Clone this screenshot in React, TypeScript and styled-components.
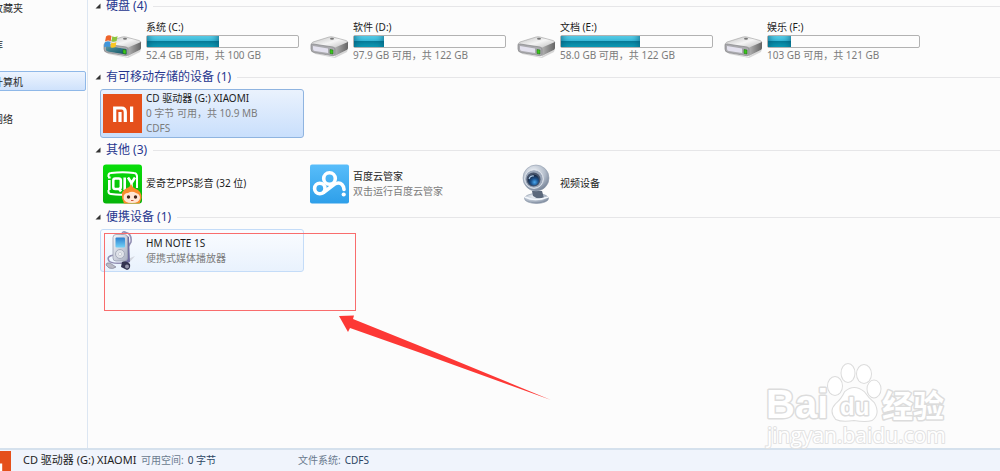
import React from "react";
import styled, { createGlobalStyle } from "styled-components";

const Global = createGlobalStyle`
  * { box-sizing: border-box; }
  body { margin: 0; background: #fcfcfc; font-family: "Noto Sans", "Noto Sans CJK SC", sans-serif; }
`;

const Window = styled.div`
  position: relative;
  display: flex;
  flex-direction: column;
  height: 100vh;
  overflow: hidden;
  font-size: 10px;
  color: #1c1c1c;
`;
const Body = styled.div`
  display: flex;
  flex: 1;
  min-height: 0;
  overflow: hidden;
`;
const Sidebar = styled.nav`
  display: flex;
  flex-direction: column;
  gap: 17px;
  flex: 0 0 88px;
  overflow: hidden;
  margin-top: -3px;
  padding-right: 1px;
  border-right: 1px solid #dce6f2;
`;
const NavLink = styled.a<{ $active?: boolean }>`
  display: flex;
  align-items: center;
  height: 20px;
  margin-left: -8px;
  border: 1px solid ${(p) => (p.$active ? "#8fb8e8" : "transparent")};
  border-radius: 2px;
  background: ${(p) => (p.$active ? "linear-gradient(#edf4fe, #cfe2fc)" : "none")};
  color: #2a2a2a;
  text-decoration: none;
`;
const Content = styled.main`
  flex: 1;
  min-width: 0;
  margin-top: -4px;
`;
const GroupTitle = styled.h2`
  display: flex;
  align-items: center;
  height: 20px;
  margin: 0;
  padding-left: 7px;
  font-size: 12px;
  line-height: 20px;
  font-weight: 400;
  color: #27378f;
  white-space: nowrap;
  svg { margin-right: 5px; }
  &::after {
    content: "";
    flex: 1;
    height: 1px;
    margin-left: 6px;
    background: #e6e6e8;
  }
`;
const Tiles = styled.div`
  display: flex;
  gap: 3px;
  padding: 2px 0 2px 12px;
`;
const Tile = styled.button<{ $state?: "selected" | "hover" }>`
  display: flex;
  align-items: center;
  gap: 3px;
  flex: 0 0 204px;
  min-height: 43px;
  padding: 0 4px 0 2px;
  border: 1px solid ${(p) => (p.$state === "selected" ? "#8fb4e0" : p.$state === "hover" ? "#c4dcf8" : "transparent")};
  border-radius: 3px;
  background: ${(p) =>
    p.$state === "selected" ? "linear-gradient(#eaf2fd, #c9dffc)" : p.$state === "hover" ? "linear-gradient(#fafcff, #e9f2fd)" : "none"};
  font: inherit;
  color: inherit;
  text-align: left;
  svg { flex: none; }
`;
const Lines = styled.span`
  display: flex;
  flex-direction: column;
  flex: 1;
  padding: 1px 0;
  line-height: 15px;
  white-space: nowrap;
`;
const Muted = styled.span`
  color: #7b7b7b;
`;
const Meter = styled.span`
  display: block;
  height: 13px;
  border: 1px solid #b2b2b2;
  border-radius: 2px;
  background: #fdfdfd;
`;
const Fill = styled.span`
  display: block;
  height: 11px;
  background: linear-gradient(#5ccfe8 0, #35b6d6 45%, #067b98 50%, #0d9cb6 100%);
  box-shadow: inset 8px 0 8px -8px #055a78, inset -8px 0 8px -8px #055a78;
`;
const Details = styled.footer`
  display: flex;
  flex: 0 0 23px;
  overflow: hidden;
  border-top: 2px solid #d5e1ed;
  background: #f0f4fc;
  padding-top: 1px;
  line-height: 18px;
  white-space: nowrap;
  > svg { flex: none; margin-left: -28px; }
`;
const DetailColumn = styled.div<{ $width: number; $inset?: number }>`
  flex: 0 0 ${(p) => p.$width}px;
  padding-left: ${(p) => p.$inset ?? 0}px;
  color: #2c4564;
`;
const DetailName = styled.div`
  font-size: 11px;
  color: #1e1e1e;
`;
const DetailLabel = styled.span`
  color: #6b7b8f;
  margin-right: 4px;
`;
const DetailKind = styled.div`
  line-height: 14px;
`;
const Highlight = styled.div`
  position: absolute;
  left: 104px;
  top: 233px;
  width: 252px;
  height: 78px;
  border: 1px solid #f96d6d;
`;
const Arrow = styled.svg`
  position: absolute;
  left: 330px;
  top: 306px;
`;
const Watermark = styled.svg`
  position: absolute;
  right: 46px;
  bottom: 18px;
`;

const Triangle = () => (
  <svg width="6" height="6" viewBox="0 0 6 6" aria-hidden="true">
    <path d="M5.5 0.5V5.5H0.5Z" fill="#333" />
  </svg>
);

const DriveIcon = ({ system }: { system?: boolean }) => (
  <svg width="40" height="40" viewBox="0 -2 40 40" aria-hidden="true">
    <defs>
      <linearGradient id="driveTop" x1="0" y1="0" x2="1" y2="1">
        <stop offset="0" stopColor="#bcbcbc" />
        <stop offset=".5" stopColor="#f5f5f5" />
        <stop offset="1" stopColor="#b5b5b5" />
      </linearGradient>
      <linearGradient id="driveSide" x1="0" y1="0" x2="1" y2="0">
        <stop offset="0" stopColor="#b8b8b8" />
        <stop offset="1" stopColor="#646464" />
      </linearGradient>
      <linearGradient id="driveTeal" x1="0" y1="0" x2="1" y2="1">
        <stop offset="0" stopColor="#5b98a6" />
        <stop offset="1" stopColor="#0b5260" />
      </linearGradient>
    </defs>
    <path d="M1 25 Q2 29 6 29 L24 33 L38 25 L37 28 L25 34 L5 30Z" fill="#000" opacity=".15" />
    <path d="M1 21 Q1 19 3 18 L19 13 Q21 12.500 23 13 L36 16.500 Q38 17 37.800 19 L25 25 L2 22Z" fill="url(#driveTop)" stroke="#a0a0a0" strokeWidth=".6" />
    <path d="M24 24 L38 18 V24 Q38 25 37 25.800 L25 32Z" fill="url(#driveSide)" />
    <path d="M1 21 Q1 20 3 20 L23 23 Q25 23.500 25 25 V30 Q25 32 23 31.800 L4 28.500 Q1 28 1 25Z" fill="#aaaaae" stroke="#858588" strokeWidth=".7" />
    <path d="M3 22 L18 24.500 V29 L5 27 Q3 27 3 25Z" fill={system ? "url(#driveTeal)" : "#e3e1ee"} />
    {system && <path d="M3 22 L23.500 25 V30.500 L5 27.500 Q3 27 3 25Z" fill="url(#driveTeal)" />}
    <path d="M20 25.500 L23 26 V30 L20 29.500Z" fill="#3ac71c" stroke="#1e6812" strokeWidth=".5" />
    <ellipse cx="22" cy="14.800" rx="2" ry="1" fill="#777" />
    {system && (
      <g>
        <path d="M3 12.500 Q5.500 10.500 8.500 12 L7.700 17 Q5 16 2 17.500Z" fill="#ee642b" />
        <path d="M9.300 12.300 Q12 13.800 14.600 12 L13.600 17 Q11 18.500 8.500 17.300Z" fill="#8bc440" />
        <path d="M1.800 18.300 Q4.800 16.900 7.500 18 L6.700 23 Q4 21.800 1 23.300Z" fill="#3f96dc" />
        <path d="M8.300 18.400 Q11 19.600 13.400 18 L12.500 23 Q10 24.500 7.500 23.300Z" fill="#fbc722" />
      </g>
    )}
  </svg>
);

const MiIcon = () => (
  <svg width="40" height="40" viewBox="0 0 40 40" aria-hidden="true">
    <rect width="39" height="39" fill="#e5501b" />
    <path d="M11.700 28V14H18.500Q22.300 14 22.300 18V28M17 18V28M28.600 12.500V28" fill="none" stroke="#fff" strokeWidth="3.200" />
  </svg>
);

const IqiyiIcon = () => (
  <svg width="40" height="40" viewBox="0 0 40 40" aria-hidden="true">
    <defs>
      <linearGradient id="iq" x1="0" y1="0" x2="0" y2="1">
        <stop offset="0" stopColor="#08de0a" />
        <stop offset="1" stopColor="#06b308" />
      </linearGradient>
    </defs>
    <rect width="39" height="39" y=".5" rx="3" fill="url(#iq)" />
    <path d="M5.500 13V11Q6 9 8 9Q20 7.500 31 9Q33.500 9 34 12V24M5.500 26V28Q6 30 8 30Q15 31 22 30.500" fill="none" stroke="#fff" strokeWidth="2" />
    <path d="M6.300 16V26M6.300 12.500V14.500M15.500 24L18 27.500M21.700 13.500V26M25 13.500L28.500 19V26M32 13.500L28.500 19" fill="none" stroke="#fff" strokeWidth="2.600" />
    <rect x="10.300" y="14.500" width="7.500" height="10.500" rx="2" fill="none" stroke="#fff" strokeWidth="2.500" />
    <path d="M19 34Q18 26 24 24Q27 23 28 20Q29 23 32 24.500Q39 27 38.500 34L36.500 39.500H21Z" fill="#f98b2c" />
    <path d="M20.500 34Q20.500 29 25 29Q29 26.500 33 29Q37 30 37 34Q36.500 39 29 39Q21 39 20.500 34Z" fill="#ffe6d4" />
    <circle cx="25.500" cy="33" r="1.700" fill="#45261b" />
    <circle cx="32.500" cy="33" r="1.700" fill="#45261b" />
    <path d="M28 36.500H30.500" stroke="#d45b41" />
  </svg>
);

const CloudIcon = () => (
  <svg width="40" height="40" viewBox="0 0 40 40" aria-hidden="true">
    <defs>
      <linearGradient id="cloud" x1="0" y1="0" x2="0" y2="1">
        <stop offset="0" stopColor="#58bdfa" />
        <stop offset="1" stopColor="#2e9fe9" />
      </linearGradient>
    </defs>
    <rect width="39" height="39" y=".5" rx="2" fill="url(#cloud)" />
    <circle cx="19.500" cy="14.500" r="5.800" fill="none" stroke="#fff" strokeWidth="3.600" />
    <circle cx="9.800" cy="24.500" r="5.200" fill="none" stroke="#fff" strokeWidth="3.600" />
    <path d="M13.500 28.500L24 20.500Q29 17.500 32 20.500Q34 22.500 34 25.500" fill="none" stroke="#fff" strokeWidth="3.600" strokeLinecap="round" />
    <circle cx="33.700" cy="30.500" r="2.100" fill="#fff" />
  </svg>
);

const WebcamIcon = () => (
  <svg width="40" height="40" viewBox="0 0 40 40" aria-hidden="true">
    <defs>
      <radialGradient id="camBody" cx=".4" cy=".3" r=".75">
        <stop offset="0" stopColor="#f3f6fa" />
        <stop offset=".6" stopColor="#b1bbc9" />
        <stop offset="1" stopColor="#6e7c91" />
      </radialGradient>
      <radialGradient id="camLens" cx=".6" cy=".7" r=".65">
        <stop offset="0" stopColor="#49a9f0" />
        <stop offset=".5" stopColor="#1c528d" />
        <stop offset="1" stopColor="#16263f" />
      </radialGradient>
    </defs>
    <ellipse cx="19.500" cy="34.500" rx="12" ry="5" fill="url(#camBody)" stroke="#8d99aa" strokeWidth=".6" />
    <path d="M15 27H25L27 34Q21 36 16 32Z" fill="#5c697c" />
    <path d="M8 33Q18 38 31 33" fill="none" stroke="#f3f7fc" strokeWidth="1.500" />
    <circle cx="19" cy="14" r="13" fill="url(#camBody)" stroke="#909cad" strokeWidth=".6" />
    <circle cx="17" cy="15" r="9.300" fill="#9ba7b9" stroke="#e5eaf1" />
    <circle cx="16.500" cy="15.500" r="7" fill="#45536b" />
    <circle cx="16.500" cy="16" r="5.500" fill="url(#camLens)" />
    <path d="M12 15Q13 11 17 12" fill="none" stroke="#a9c5e2" strokeWidth="1.200" />
  </svg>
);

const PlayerIcon = () => (
  <svg width="40" height="40" viewBox="0 0 40 40" aria-hidden="true">
    <defs>
      <linearGradient id="player" x1="0" y1="0" x2="1" y2="1">
        <stop offset="0" stopColor="#f5f7fa" />
        <stop offset="1" stopColor="#aab0c2" />
      </linearGradient>
      <linearGradient id="screen" x1="0" y1="0" x2="0" y2="1">
        <stop offset="0" stopColor="#2a7fcf" />
        <stop offset="1" stopColor="#74d2f7" />
      </linearGradient>
    </defs>
    <path d="M19 4Q19-.5 23 1.500Q29 3 28 11L25 16M11 24Q3 25 6 30Q9 33 19 32Q24 32 25 36" fill="none" stroke="#9390b4" strokeWidth="1.600" />
    <path d="M23 29L32 25L25 33Z" fill="#b6b6bd" opacity=".5" />
    <path d="M23 4L26 6L27 31L22 33Z" fill="#706da0" />
    <rect x="10" y="3.500" width="14.500" height="26.500" rx="3" fill="url(#player)" stroke="#9a9fb1" strokeWidth=".8" />
    <rect x="12.500" y="6.500" width="9.500" height="10" rx="1" fill="url(#screen)" />
    <circle cx="17" cy="23" r="4.500" fill="#dfe2e9" stroke="#a5abbb" />
    <circle cx="17" cy="23" r="1.500" fill="#fff" stroke="#a5abbb" strokeWidth=".5" />
    <path d="M3 34Q3 31 7 32L13 36Q10 38.500 6 37Z" fill="#b9b9c4" stroke="#77778d" strokeWidth=".6" />
    <path d="M19 31Q23 29 27 33Q28 38 24 39L18 36Z" fill="#343451" />
    <circle cx="24" cy="35.500" r="2" fill="#9495ab" />
  </svg>
);

const drives = [
  { name: "系统 (C:)", info: "52.4 GB 可用，共 100 GB", used: 48, system: true },
  { name: "软件 (D:)", info: "97.9 GB 可用，共 122 GB", used: 20 },
  { name: "文档 (E:)", info: "58.0 GB 可用，共 122 GB", used: 52 },
  { name: "娱乐 (F:)", info: "103 GB 可用，共 121 GB", used: 15 },
];

const Group = ({ title, children }: { title: string; children: React.ReactNode }) => (
  <section>
    <GroupTitle><Triangle />{title}</GroupTitle>
    <Tiles>{children}</Tiles>
  </section>
);

export default function App() {
  return (
    <>
      <Global />
      <Window>
        <Body>
          <Sidebar>
            <NavLink href="#favorites">收藏夹</NavLink>
            <NavLink href="#libraries">库</NavLink>
            <NavLink href="#computer" $active>计算机</NavLink>
            <NavLink href="#network">网络</NavLink>
          </Sidebar>
          <Content>
            <Group title="硬盘 (4)">
              {drives.map((d) => (
                <Tile key={d.name}>
                  <DriveIcon system={d.system} />
                  <Lines>
                    <span>{d.name}</span>
                    <Meter role="progressbar" aria-label={d.name} aria-valuenow={d.used}>
                      <Fill style={{ width: `${d.used}%` }} />
                    </Meter>
                    <Muted>{d.info}</Muted>
                  </Lines>
                </Tile>
              ))}
            </Group>
            <Group title="有可移动存储的设备 (1)">
              <Tile $state="selected">
                <MiIcon />
                <Lines>
                  <span>CD 驱动器 (G:) XIAOMI</span>
                  <Muted>0 字节 可用，共 10.9 MB</Muted>
                  <Muted>CDFS</Muted>
                </Lines>
              </Tile>
            </Group>
            <Group title="其他 (3)">
              <Tile>
                <IqiyiIcon />
                <Lines>爱奇艺PPS影音 (32 位)</Lines>
              </Tile>
              <Tile>
                <CloudIcon />
                <Lines>
                  <span>百度云管家</span>
                  <Muted>双击运行百度云管家</Muted>
                </Lines>
              </Tile>
              <Tile>
                <WebcamIcon />
                <Lines>视频设备</Lines>
              </Tile>
            </Group>
            <Group title="便携设备 (1)">
              <Tile $state="hover">
                <PlayerIcon />
                <Lines>
                  <span>HM NOTE 1S</span>
                  <Muted>便携式媒体播放器</Muted>
                </Lines>
              </Tile>
            </Group>
          </Content>
        </Body>
        <Details>
          <MiIcon />
          <DetailColumn $width={129} $inset={11}>
            <DetailName>CD 驱动器 (G:) XIAOMI</DetailName>
            <DetailKind>CD 驱动器</DetailKind>
          </DetailColumn>
          <DetailColumn $width={157}>
            <DetailLabel>可用空间:</DetailLabel>0 字节
            <DetailKind>总大小:</DetailKind>
          </DetailColumn>
          <DetailColumn $width={120}>
            <DetailLabel>文件系统:</DetailLabel>CDFS
          </DetailColumn>
        </Details>
        <Highlight />
        <Arrow width="222" height="96" viewBox="0 0 222 96" aria-hidden="true">
          <path d="M9 10L24 9.500L23 13L90 40L221 94L88 46L20 22L18 26Z" fill="#fd3835" />
        </Arrow>
        <Watermark width="192" height="92" viewBox="0 0 192 92" aria-hidden="true">
          <g fill="#fff" stroke="#dcdcdc" strokeWidth="3" paintOrder="stroke" strokeLinejoin="round">
            <text x="4" y="57" fontFamily="Liberation Sans" fontWeight="700" fontSize="40">Bai</text>
            <g strokeWidth="2">
              <ellipse cx="73" cy="25" rx="7" ry="9" />
              <ellipse cx="86" cy="12" rx="6.500" ry="9" />
              <ellipse cx="102" cy="13" rx="7" ry="9" />
              <ellipse cx="112" cy="28" rx="6.500" ry="8.500" />
              <path d="M83 31Q92 23 102 31Q106 37 112 42Q118 53 110 59Q104 61 92 59Q80 61 74 58Q67 50 74 43Q80 38 83 31Z" />
            </g>
            <text x="78" y="54" fontFamily="Liberation Sans" fontWeight="700" fontSize="24">du</text>
            <text x="120" y="56" fontFamily="Noto Sans CJK SC" fontWeight="700" fontSize="31">经验</text>
            <text x="5" y="82" fontFamily="Open Sans" fontSize="21" strokeWidth="2" stroke="#e2e2e2">jingyan.baidu.com</text>
          </g>
        </Watermark>
      </Window>
    </>
  );
}
